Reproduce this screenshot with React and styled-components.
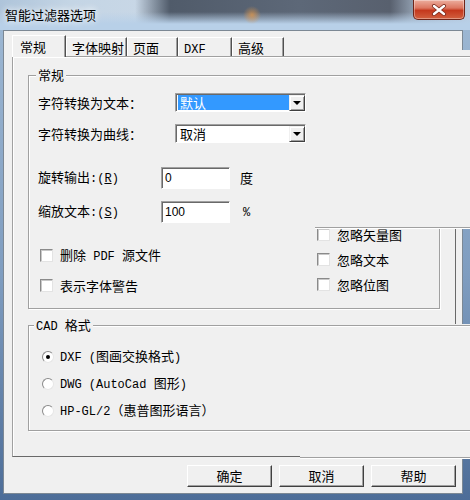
import React from 'react';
import styled, { createGlobalStyle } from 'styled-components';

const GlobalStyle = createGlobalStyle`
  html, body {
    margin: 0;
    padding: 0;
  }
  body {
    width: 470px;
    height: 500px;
    overflow: hidden;
    background: #6f8fb5;
  }
`;

const CJK = `"Noto Sans CJK SC", "Noto Sans", sans-serif`;

// window frame
const Window = styled.div`
  position: relative;
  width: 470px;
  height: 500px;
  display: flex;
  flex-direction: column;
  overflow: hidden;
  font-family: ${CJK};
  font-size: 13px;
  color: #000;
  background: linear-gradient(180deg, #9fb9d4 0%, #7f9dc0 55%, #4d6d98 100%);
`;

// blurred aero glass: light band at the bottom, dark desktop behind the middle
const TitleBar = styled.div`
  height: 30px;
  flex: none;
  display: flex;
  align-items: flex-start;
  background:
    radial-gradient(circle at 252px 15px, rgba(226, 150, 70, 0.75) 0, rgba(226, 150, 70, 0) 9px),
    linear-gradient(180deg, rgba(184, 208, 232, 0) 12px, rgba(184, 208, 232, 1) 24px),
    linear-gradient(90deg, rgba(80, 90, 105, 0) 135px, #505b6a 170px, #5d6878 300px, #58606e 390px, rgba(90, 100, 115, 0.5) 412px, rgba(90, 100, 115, 0) 470px),
    linear-gradient(90deg, #aec4da 0%, #c4d5e5 15%, #c8d7e6 30%, #bccde0 100%);
`;

const Title = styled.div`
  padding: 8px 0 0 5px;
  line-height: 14px;
  text-shadow: 0 0 6px rgba(255, 255, 255, 0.95), 0 0 10px rgba(255, 255, 255, 0.7);
`;

const CloseButton = styled.div`
  margin-left: auto;
  margin-right: 5px;
  width: 52px;
  height: 20px;
  box-sizing: border-box;
  border: 1px solid #6f2519;
  border-top: none;
  border-radius: 0 0 5px 5px;
  display: flex;
  align-items: center;
  justify-content: center;
  background: linear-gradient(180deg, #ecae9e 0%, #dc7660 42%, #c4381d 55%, #d2603f 100%);
  box-shadow: inset 0 0 0 1px rgba(255, 255, 255, 0.35);
`;

// dialog body
const Client = styled.div`
  flex: 1;
  margin: 0 7px 6px 3px;
  padding: 4px 6px 0 8px;
  display: flex;
  flex-direction: column;
  background: #f0f0f0;
  border: 1px solid #7c8894;
`;

const TabStrip = styled.div`
  height: 21px;
  display: flex;
  align-items: flex-end;
  position: relative;
  z-index: 1;
`;

const Tab = styled.div`
  box-sizing: border-box;
  width: ${(p) => p.$w}px;
  height: ${(p) => (p.$active ? 22 : 19)}px;
  margin-bottom: ${(p) => (p.$active ? -1 : 0)}px;
  padding: ${(p) => (p.$active ? '4px 0 0 7px' : '3px 0 0 5px')};
  line-height: 14px;
  background: #f0f0f0;
  border-top: 1px solid #fff;
  border-left: 1px solid #fff;
  border-right: 1px solid #505050;
  box-shadow: inset -1px 0 #a0a0a0;
  white-space: nowrap;
`;

const TabPanel = styled.div`
  box-sizing: border-box;
  height: 401px;
  padding: 18px 15px 0 15px;
  display: flex;
  flex-direction: column;
  border: 1px solid;
  border-color: #a0a0a0 #696969 #696969 #a0a0a0;
  box-shadow: inset 1px 1px #fff;
`;

const Group = styled.div`
  box-sizing: border-box;
  height: ${(p) => p.$h}px;
  margin-top: ${(p) => p.$mt || 0}px;
  padding-left: ${(p) => p.$pl}px;
  border: 1px solid #a0a0a0;
  box-shadow: 1px 1px #fff, inset 1px 1px #fff;
`;

const Legend = styled.div`
  width: fit-content;
  margin: -8px 0 0 ${(p) => p.$ml}px;
  padding: 0 2px;
  line-height: 14px;
  background: #f0f0f0;
  white-space: nowrap;
`;

const M = styled.span`
  font-family: "Liberation Mono", "DejaVu Sans Mono", monospace;
  font-size: 12px;
  white-space: pre;
`;

const FieldRow = styled.div`
  display: flex;
  align-items: center;
  height: ${(p) => p.$h}px;
  margin-top: ${(p) => p.$mt}px;
`;

const FieldLabel = styled.div`
  width: ${(p) => p.$w}px;
  flex: none;
  white-space: nowrap;
  line-height: 14px;
`;

const Combo = styled.div`
  box-sizing: border-box;
  width: 131px;
  height: 19px;
  display: flex;
  background: #fff;
  border: 1px solid;
  border-color: #a0a0a0 #fff #fff #a0a0a0;
  box-shadow: inset 1px 1px #696969;
`;

const ComboValue = styled.div`
  flex: 1;
  display: flex;
  padding: 1px 0 1px 2px;
`;

const ComboText = styled.div`
  flex: 1;
  padding-left: 2px;
  line-height: 15px;
  font-size: 13px;
  color: ${(p) => (p.$selected ? '#fff' : '#000')};
  background: ${(p) => (p.$selected ? '#3399ff' : 'transparent')};
`;

const ComboArrow = styled.div`
  box-sizing: border-box;
  width: 16px;
  height: 16px;
  margin: 1px 0 0 0;
  display: flex;
  align-items: center;
  justify-content: center;
  background: #f0f0f0;
  border: 1px solid;
  border-color: #f0f0f0 #404040 #404040 #f0f0f0;
  box-shadow: inset 1px 1px #fff, inset -1px -1px #a0a0a0;

  &::after {
    content: '';
    border-left: 4px solid transparent;
    border-right: 4px solid transparent;
    border-top: 4px solid #000;
  }
`;

const TextBox = styled.div`
  box-sizing: border-box;
  width: 69px;
  height: 22px;
  padding: 3px 0 0 3px;
  background: #fff;
  font-family: "Liberation Sans", Arial, sans-serif;
  font-size: 12px;
  line-height: 14px;
  border: 1px solid;
  border-color: #a0a0a0 #fff #fff #a0a0a0;
  box-shadow: inset 1px 1px #696969;
`;

const Unit = styled.div`
  margin-left: ${(p) => p.$ml}px;
  line-height: 14px;
`;

const OptionArea = styled.div`
  display: flex;
  margin-top: 5px;
`;

const OptionColumn = styled.div`
  width: ${(p) => (p.$w ? `${p.$w}px` : 'auto')};
  padding: ${(p) => p.$pt}px 0 0 ${(p) => p.$pl || 0}px;
  box-sizing: border-box;
  display: flex;
  flex-direction: column;
  gap: ${(p) => p.$gap}px;
`;

const CheckRow = styled.div`
  display: flex;
  align-items: center;
  gap: 7px;
  height: 13px;
  line-height: 14px;
  white-space: nowrap;
`;

const CheckBox = styled.div`
  box-sizing: border-box;
  width: 13px;
  height: 13px;
  background: #fff;
  border: 1px solid;
  border-color: #8a8a8a #e3e3e3 #e3e3e3 #8a8a8a;
  box-shadow: inset 1px 1px #c8c8c8;
`;

const RadioList = styled.div`
  display: flex;
  flex-direction: column;
  gap: 13px;
  margin-top: 16px;
`;

const RadioRow = styled.div`
  display: flex;
  align-items: center;
  gap: 6px;
  height: 14px;
  line-height: 14px;
  white-space: nowrap;
`;

const Radio = styled.div`
  box-sizing: border-box;
  width: 12px;
  height: 12px;
  border-radius: 50%;
  background: #fff;
  border: 1px solid;
  border-color: #8a8a8a #e6e6e6 #e6e6e6 #8a8a8a;
  display: flex;
  align-items: center;
  justify-content: center;

  &::after {
    content: '';
    width: 4px;
    height: 4px;
    border-radius: 50%;
    background: ${(p) => (p.$checked ? '#000' : 'transparent')};
  }
`;

const ButtonRow = styled.div`
  display: flex;
  justify-content: flex-end;
  gap: 7px;
  margin-top: 8px;
`;

const DlgButton = styled.div`
  box-sizing: border-box;
  width: 85px;
  height: 22px;
  display: flex;
  align-items: center;
  justify-content: center;
  background: #f0f0f0;
  border: 1px solid;
  border-color: #fff #404040 #404040 #fff;
  box-shadow: inset -1px -1px #a0a0a0;
  line-height: 14px;
`;

// stale pieces of a second copy of the dialog drawn over the right side
const Ghost = styled.div`
  position: absolute;
  left: ${(p) => p.$left}px;
  top: ${(p) => p.$top}px;
  right: 0;
  height: ${(p) => p.$h}px;
  display: flex;
  flex-direction: column;
  background: #f0f0f0;
`;

const GhostLine = styled.div`
  height: 1px;
  margin-top: ${(p) => p.$gap}px;
  background: #a0a0a0;
  box-shadow: 0 1px #fff;
`;

const tabs = [
  { label: '常规', w: 54, active: true },
  { label: '字体映射', w: 61 },
  { label: '页面', w: 51 },
  { label: <M>DXF</M>, w: 54 },
  { label: '高级', w: 52 },
];

function CloseGlyph() {
  const d = 'M3 2 L13 10 M13 2 L3 10';
  return (
    <svg width="16" height="12" viewBox="0 0 16 12">
      <path d={d} stroke="#7a2a1c" strokeWidth="4" strokeLinecap="round" fill="none" />
      <path d={d} stroke="#fff" strokeWidth="2.4" strokeLinecap="round" fill="none" />
    </svg>
  );
}

export default function App() {
  return (
    <>
      <GlobalStyle />
      <Window>
        <TitleBar>
          <Title>智能过滤器选项</Title>
          <CloseButton>
            <CloseGlyph />
          </CloseButton>
        </TitleBar>
        <Client>
          <TabStrip>
            {tabs.map((t, i) => (
              <Tab key={i} $w={t.w} $active={t.active}>
                {t.label}
              </Tab>
            ))}
          </TabStrip>
          <TabPanel>
            <Group $h={234} $pl={9}>
              <Legend $ml={-2}>常规</Legend>
              <FieldRow $h={19} $mt={11}>
                <FieldLabel $w={137}>字符转换为文本：</FieldLabel>
                <Combo>
                  <ComboValue>
                    <ComboText $selected>默认</ComboText>
                  </ComboValue>
                  <ComboArrow />
                </Combo>
              </FieldRow>
              <FieldRow $h={19} $mt={12}>
                <FieldLabel $w={137}>字符转换为曲线：</FieldLabel>
                <Combo>
                  <ComboValue>
                    <ComboText>取消</ComboText>
                  </ComboValue>
                  <ComboArrow />
                </Combo>
              </FieldRow>
              <FieldRow $h={22} $mt={24}>
                <FieldLabel $w={123}>
                  旋转输出<M>:(<u>R</u>)</M>
                </FieldLabel>
                <TextBox>0</TextBox>
                <Unit $ml={10}>度</Unit>
              </FieldRow>
              <FieldRow $h={22} $mt={12}>
                <FieldLabel $w={123}>
                  缩放文本<M>:(<u>S</u>)</M>
                </FieldLabel>
                <TextBox>100</TextBox>
                <Unit $ml={13}>
                  <M>%</M>
                </Unit>
              </FieldRow>
              <OptionArea>
                <OptionColumn $w={279} $pt={21} $pl={2} $gap={17}>
                  <CheckRow>
                    <CheckBox />
                    <span>
                      删除<M> PDF </M>源文件
                    </span>
                  </CheckRow>
                  <CheckRow>
                    <CheckBox />
                    <span>表示字体警告</span>
                  </CheckRow>
                </OptionColumn>
                <OptionColumn $pt={0} $gap={12}>
                  <CheckRow>
                    <CheckBox />
                    <span>忽略矢量图</span>
                  </CheckRow>
                  <CheckRow>
                    <CheckBox />
                    <span>忽略文本</span>
                  </CheckRow>
                  <CheckRow>
                    <CheckBox />
                    <span>忽略位图</span>
                  </CheckRow>
                </OptionColumn>
              </OptionArea>
            </Group>

            <Group $h={106} $mt={16} $pl={13}>
              <Legend $ml={-8}>
                <M>CAD </M>格式
              </Legend>
              <RadioList>
                <RadioRow>
                  <Radio $checked />
                  <span>
                    <M>DXF (</M>图画交换格式<M>)</M>
                  </span>
                </RadioRow>
                <RadioRow>
                  <Radio />
                  <span>
                    <M>DWG (AutoCad </M>图形<M>)</M>
                  </span>
                </RadioRow>
                <RadioRow>
                  <Radio />
                  <span>
                    <M>HP-GL/2</M>（惠普图形语言）
                  </span>
                </RadioRow>
              </RadioList>
            </Group>
          </TabPanel>
          <ButtonRow>
            <DlgButton>确定</DlgButton>
            <DlgButton>取消</DlgButton>
            <DlgButton>帮助</DlgButton>
          </ButtonRow>
        </Client>

        <Ghost $left={315} $top={50} $h={179}>
          <GhostLine $gap={6} />
          <GhostLine $gap={18} />
          <GhostLine $gap={151} />
        </Ghost>
        <Ghost $left={300} $top={324} $h={135}>
          <GhostLine $gap={1} />
          <GhostLine $gap={104} />
          <GhostLine $gap={26} />
        </Ghost>
      </Window>
    </>
  );
}
